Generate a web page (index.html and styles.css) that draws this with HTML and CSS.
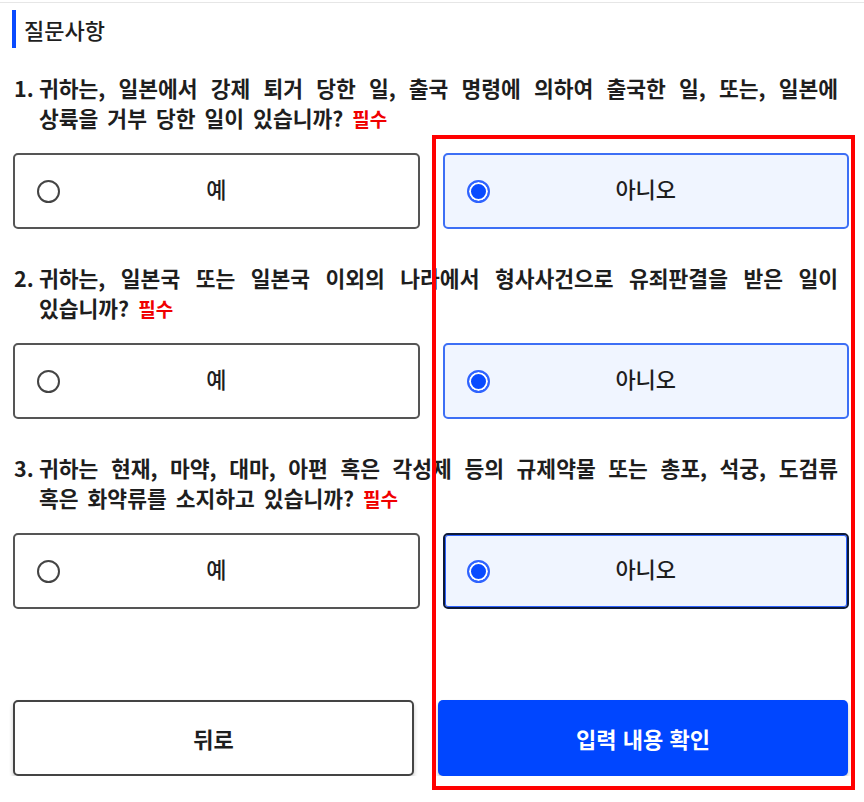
FILE: index.html
```html
<!DOCTYPE html>
<html lang="ko">
<head>
    <meta charset="UTF-8">
    <meta name="viewport" content="width=device-width, initial-scale=1.0">
    <title>질문사항</title>
    <link rel="stylesheet" href="styles.css">
</head>

<body>
<div class="page">
    <!-- 제목 -->
    <h2 class="section-title">질문사항</h2>

    <!-- 질문 1 -->
    <div class="question">
        <span class="num">1.</span>
        <p class="text">귀하는, 일본에서 강제 퇴거 당한 일, 출국 명령에 의하여 출국한 일, 또는, 일본에 상륙을 거부 당한 일이 있습니까? <span class="required">필수</span></p>
    </div>
    <div class="options">
        <label class="option">
            <input type="radio" name="q1">
            <span class="label">예</span>
        </label>
        <label class="option selected">
            <input type="radio" name="q1" checked>
            <span class="label">아니오</span>
        </label>
    </div>

    <!-- 질문 2 -->
    <div class="question">
        <span class="num">2.</span>
        <p class="text">귀하는, 일본국 또는 일본국 이외의 나라에서 형사사건으로 유죄판결을 받은 일이 있습니까? <span class="required">필수</span></p>
    </div>
    <div class="options">
        <label class="option">
            <input type="radio" name="q2">
            <span class="label">예</span>
        </label>
        <label class="option selected">
            <input type="radio" name="q2" checked>
            <span class="label">아니오</span>
        </label>
    </div>

    <!-- 질문 3 -->
    <div class="question">
        <span class="num">3.</span>
        <p class="text">귀하는 현재, 마약, 대마, 아편 혹은 각성제 등의 규제약물 또는 총포, 석궁, 도검류 혹은 화약류를 소지하고 있습니까? <span class="required">필수</span></p>
    </div>
    <div class="options">
        <label class="option">
            <input type="radio" name="q3">
            <span class="label">예</span>
        </label>
        <label class="option selected focused">
            <input type="radio" name="q3" checked>
            <span class="label">아니오</span>
        </label>
    </div>

    <!-- 하단 버튼 -->
    <div class="actions">
        <button class="btn-back">뒤로</button>
        <button class="btn-confirm">입력 내용 확인</button>
    </div>
</div>

<!-- 강조 표시 -->
<div class="highlight"></div>
</body>
</html>
```

FILE: styles.css
```css
body {
    font-family: "Noto Sans CJK KR", "Noto Sans", sans-serif;
    margin: 0;
    padding-top: 2px;
    background-color: #fff;
    color: #1e1e1e;
}
.page {
    border-top: 1px solid #e6e6e6;
    padding: 0 15px 0 13px;
}
.section-title {
    margin: 7px 0 0 -1px;
    height: 38px;
    display: flex;
    align-items: center;
    padding-left: 8px;
    border-left: 4px solid #0a4bff;
    font-size: 22px;
    font-weight: 500;
}
.question {
    display: flex;
    margin: 34px 11px 0 1px;
    font-size: 21.5px;
    font-weight: 700;
    line-height: 30px;
}
.section-title + .question {
    margin-top: 25px;
}
.question .num {
    flex: 0 0 25px;
}
.question .text {
    margin: 0;
    flex: 1;
    text-align: justify;
    word-break: keep-all;
    word-spacing: 3px;
}
.required {
    color: #f00000;
    font-size: 19px;
    line-height: 1;
}
.options {
    display: grid;
    grid-template-columns: 1fr 1fr;
    gap: 23px;
    margin-top: 20px;
}
.option {
    display: grid;
    grid-template-columns: 1fr auto 1fr;
    align-items: center;
    height: 76px;
    box-sizing: border-box;
    padding: 0 22px;
    border: 2px solid #555;
    border-radius: 5px;
    background-color: #fff;
    cursor: pointer;
}
.option input {
    appearance: none;
    margin: 0;
    width: 23px;
    height: 23px;
    border: 2px solid #444;
    border-radius: 50%;
    background-color: #fff;
    box-sizing: border-box;
}
.option input:checked {
    border-color: #2f63ff;
    background-color: #0a4bff;
    box-shadow: inset 0 0 0 2px #fff;
}
.option .label {
    font-size: 22px;
    font-weight: 500;
    margin-bottom: 6px;
}
.option.selected {
    border-color: #3d6ff5;
    background-color: #f0f5ff;
}
.option.focused {
    border-color: #0d1a3a;
    box-shadow: inset 0 0 0 1px #2f63ff;
}
.actions {
    display: grid;
    grid-template-columns: 401px 410px;
    gap: 24px;
    margin-top: 91px;
}
.actions button {
    height: 76px;
    font-family: inherit;
    font-size: 22px;
    font-weight: 700;
    border-radius: 5px;
    cursor: pointer;
    box-shadow: 0 3px 4px rgba(0, 0, 0, 0.22);
}
.btn-back {
    background-color: #fff;
    color: #1e1e1e;
    border: 2px solid #444;
}
.btn-confirm {
    background-color: #0046ff;
    color: #fff;
    border: none;
}
.highlight {
    position: absolute;
    left: 432px;
    top: 135px;
    width: 423px;
    height: 655px;
    box-sizing: border-box;
    border: 4px solid #ff0000;
    pointer-events: none;
}
```
